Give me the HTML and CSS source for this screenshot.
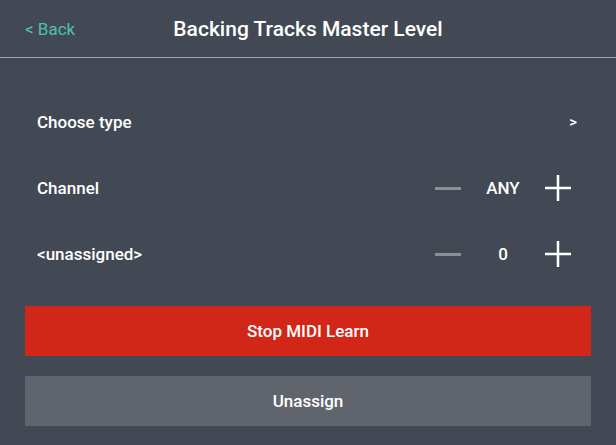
FILE: index.html
```html
<!DOCTYPE html>
<html>
<head>
<meta charset="utf-8">
<link rel="stylesheet" href="styles.css">
</head>
<body>
<div class="screen">
  <header class="header">
    <span class="back">&lt; Back</span>
    <h1 class="title">Backing Tracks Master Level</h1>
    <span></span>
  </header>
  <div class="rows">
    <div class="row">
      <span class="label">Choose type</span>
      <span class="chev">&gt;</span>
    </div>
    <div class="row">
      <span class="label">Channel</span>
      <div class="stepper">
        <span class="minus"></span>
        <span class="value">ANY</span>
        <svg class="plus" width="26" height="26" viewBox="0 0 26 26"><path d="M13 0V26M0 13H26" stroke="#fff" stroke-width="2.5"/></svg>
      </div>
    </div>
    <div class="row">
      <span class="label">&lt;unassigned&gt;</span>
      <div class="stepper">
        <span class="minus"></span>
        <span class="value">0</span>
        <svg class="plus" width="26" height="26" viewBox="0 0 26 26"><path d="M13 0V26M0 13H26" stroke="#fff" stroke-width="2.5"/></svg>
      </div>
    </div>
  </div>
  <div class="buttons">
    <div class="btn btn-red">Stop MIDI Learn</div>
    <div class="btn btn-gray">Unassign</div>
  </div>
</div>
</body>
</html>
```

FILE: styles.css
```css
html, body {
  margin: 0;
  padding: 0;
  background: #434954;
}
.screen {
  width: 616px;
  height: 445px;
  font-family: Roboto, "Liberation Sans", sans-serif;
  color: #fff;
}
.header {
  height: 57px;
  display: grid;
  grid-template-columns: 1fr auto 1fr;
  align-items: center;
  padding: 0 25px;
  border-bottom: 1px solid #9fa2a7;
}
.back {
  color: #4cc2a8;
  font-size: 17px;
}
.title {
  margin: 0;
  font-size: 21px;
  font-weight: 500;
}
.rows {
  padding-top: 31px;
}
.row {
  height: 66px;
  display: flex;
  align-items: center;
  justify-content: space-between;
  padding: 0 39px 0 37px;
}
.label {
  font-size: 17px;
  font-weight: 500;
}
.chev {
  font-size: 15px;
  font-weight: 500;
}
.stepper {
  display: flex;
  align-items: center;
  margin-right: 6px;
}
.minus {
  width: 26px;
  height: 3px;
  background: #8c8f95;
}
.value {
  width: 64px;
  margin: 0 10px;
  text-align: center;
  font-size: 17px;
  font-weight: 500;
}
.plus {
  display: block;
}
.buttons {
  padding: 19px 25px 0;
  display: flex;
  flex-direction: column;
  gap: 20px;
}
.btn {
  height: 50px;
  display: flex;
  align-items: center;
  justify-content: center;
  font-size: 17px;
  font-weight: 500;
}
.btn-red {
  background: #d22619;
}
.btn-gray {
  background: #60646d;
}
```
